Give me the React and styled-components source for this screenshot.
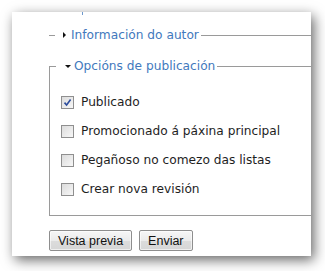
import styled, { createGlobalStyle } from 'styled-components'

const GlobalStyle = createGlobalStyle`
  html, body {
    margin: 0;
    padding: 0;
    background: #ffffff;
  }
  body {
    font-family: 'DejaVu Sans', Verdana, sans-serif;
  }
`

const Page = styled.div`
  width: 325px;
  height: 271px;
  padding: 12px 14px 15px 12px;
  box-sizing: border-box;
`

const Panel = styled.div`
  width: 299px;
  height: 244px;
  background: #ffffff;
  overflow: hidden;
  box-shadow: 3px 4px 12px rgba(0, 0, 0, 0.6);
  padding-left: 37px;
  box-sizing: border-box;
  display: flex;
  flex-direction: column;
`

const Fragment = styled.span`
  display: block;
  width: 1px;
  height: 3px;
  margin-left: 33px;
  background: #6d98cc;
`

const LegendRow = styled.div`
  display: flex;
  align-items: center;
  height: 16px;
  width: 320px;
  margin-top: ${(p) => p.$top || 0}px;
  margin-left: ${(p) => (p.$inside ? -12 : 0)}px;
`

const Rule = styled.span`
  height: 1px;
  background: #9a9a9a;
  width: ${(p) => (p.$grow ? 'auto' : `${p.$w}px`)};
  flex: ${(p) => (p.$grow ? 1 : 'none')};
`

const Arrow = styled.span`
  width: 0;
  height: 0;
  margin-left: ${(p) => (p.$open ? 9 : 8)}px;
  margin-right: ${(p) => (p.$open ? 3 : 5)}px;
  border-style: solid;
  border-color: transparent;
  ${(p) =>
    p.$open
      ? `border-width: 3.5px 3px 0 3px; border-top-color: #111;`
      : `border-width: 3.5px 0 3.5px 3.5px; border-left-color: #111;`}
`

const LegendText = styled.span`
  font-size: 12.2px;
  line-height: 16px;
  color: #4279bd;
  padding-right: 2px;
  white-space: nowrap;
`

const Fieldset = styled.div`
  margin-top: 23px;
  width: 320px;
  border-left: 1px solid #9a9a9a;
  border-bottom: 1px solid #9a9a9a;
  padding: 0 0 18px 11px;
  box-sizing: border-box;
`

const Options = styled.div`
  display: flex;
  flex-direction: column;
  gap: 13px;
  margin-top: 20px;
`

const OptionRow = styled.label`
  display: flex;
  align-items: center;
  height: 16px;
  gap: 7px;
  font-size: 12.2px;
  color: #1e1e1e;
  white-space: nowrap;
`

const Box = styled.span`
  width: 11px;
  height: 11px;
  border: 1px solid #8f8f8f;
  background: linear-gradient(135deg, #dcdcdc 0%, #f7f7f7 100%);
  display: flex;
  align-items: center;
  justify-content: center;
  flex: none;
`

const Buttons = styled.div`
  display: flex;
  gap: 7px;
  margin-top: 14px;
`

const Button = styled.button`
  height: 21px;
  padding: 0 8px;
  font-family: 'Liberation Sans', Arial, sans-serif;
  font-size: 12.5px;
  color: #111;
  border: 1px solid #8e8e8e;
  border-radius: 2px;
  background: linear-gradient(#f6f6f6 0%, #ebebeb 50%, #dcdcdc 51%, #d6d6d6 100%);
  box-shadow: inset 0 0 0 1px rgba(255, 255, 255, 0.6);
`

const options = [
  { label: 'Publicado', checked: true },
  { label: 'Promocionado á páxina principal' },
  { label: 'Pegañoso no comezo das listas' },
  { label: 'Crear nova revisión' },
]

const Check = ({ checked }) => (
  <Box>
    {checked && (
      <svg width='9' height='9' viewBox='0 0 9 9'>
        <path d='M1.5 4.6 L3.6 7 L7.6 1.6' fill='none' stroke='#2c4c9c' strokeWidth='1.6' />
      </svg>
    )}
  </Box>
)

const App = () => {
  return (
    <Page>
      <GlobalStyle />
      <Panel>
        <Fragment />
        <LegendRow $top={12}>
          <Rule $w={6} />
          <Arrow />
          <LegendText>Información do autor</LegendText>
          <Rule $grow />
        </LegendRow>
        <Fieldset>
          <LegendRow $top={-8} $inside>
            <Rule $w={7} />
            <Arrow $open />
            <LegendText>Opcións de publicación</LegendText>
            <Rule $grow />
          </LegendRow>
          <Options>
            {options.map((item) => (
              <OptionRow key={item.label}>
                <Check checked={item.checked} />
                {item.label}
              </OptionRow>
            ))}
          </Options>
        </Fieldset>
        <Buttons>
          <Button>Vista previa</Button>
          <Button>Enviar</Button>
        </Buttons>
      </Panel>
    </Page>
  )
}

export default App
